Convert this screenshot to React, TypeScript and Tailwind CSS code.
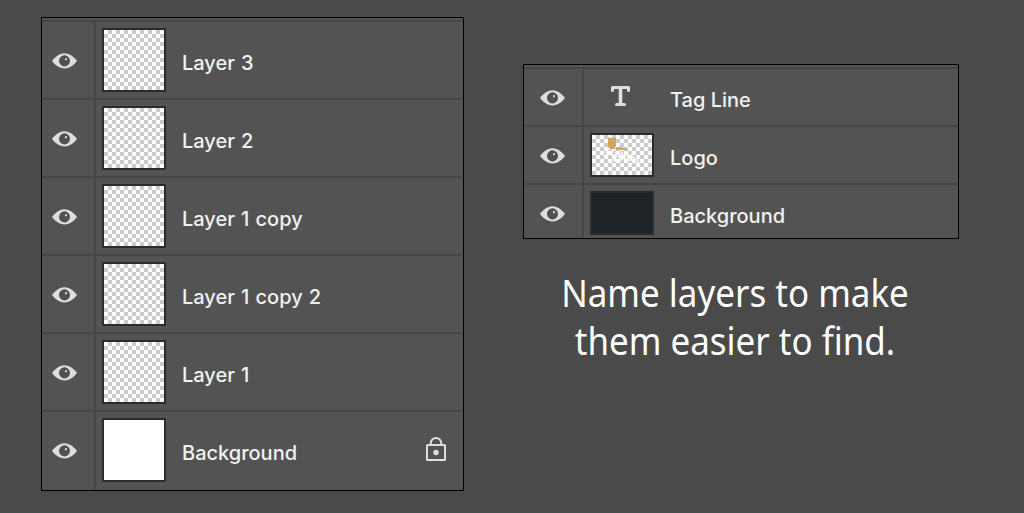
import type { ReactNode } from "react";

function Eye() {
  return (
    <svg width="25" height="16" viewBox="0 0 25 16" className="shrink-0">
      <path d="M0 8C2.800 4.400 7 .3 12.500 .3S22.200 4.400 25 8c-2.800 3.600-7 7.400-12.500 7.400S2.800 11.600 0 8Z" fill="#dedede" />
      <ellipse cx="12.500" cy="7.900" rx="5.500" ry="5.600" fill="#505050" />
      <rect x="13" y="5.200" width="2" height="2" fill="#d8d8d8" />
    </svg>
  );
}

function Lock() {
  return (
    <svg width="20" height="24" viewBox="0 0 20 24" fill="none" stroke="#dedede" strokeWidth="2">
      <rect x="1" y="8" width="18" height="15" rx="0.500" />
      <path d="M4.800 8V6.200a5.200 5.200 0 0 1 10.400 0V8" />
      <circle cx="10" cy="15.500" r="2.700" fill="#dedede" stroke="none" />
    </svg>
  );
}

function TypeIcon() {
  return (
    <svg width="19" height="20" viewBox="0 0 19 20" fill="none" stroke="#dedede" strokeWidth="3" strokeLinecap="round" strokeLinejoin="round">
      <path d="M1.500 4.500v-3h16v3M5.500 18.500h8" />
      <path d="M9.500 1.500v17" strokeWidth="3.600" />
    </svg>
  );
}

const checker = "bg-[conic-gradient(#fff_25%,#cbcbcb_0_50%,#fff_0_75%,#cbcbcb_0)] bg-[length:8px_8px] bg-[position:4px_0]";

function LogoMark() {
  return (
    <svg width="60" height="40" viewBox="0 0 60 40" className="block">
      <path d="M16 2l2 1h4l2-1v9l-1.500 3h-5L16 11Z" fill="#cda85f" />
      <path d="M23.500 13.500c3-2.500 9-2 13 2.500-4-1.200-8-1.200-13-.8Z" fill="#cda85f" />
      <path d="M14 14h4M15 14v6M20 15v5M24 17v6M27 16v7M30 17v8M33 17v8M36 18v5M40 18v5M22 21v5M25 25h5M23 24v3M33 24v3M36 25h5M42 22v5M45 22h3M46 24v4" stroke="white" strokeWidth="1.500" fill="none" />
    </svg>
  );
}

type RowProps = { name: string; thumb: ReactNode; size: string; eyeCell: string; label: string; lock?: boolean };

function Row({ name, thumb, size, eyeCell, label, lock }: RowProps) {
  return (
    <div className={`flex shrink-0 border-t-2 border-[#464646] ${size}`}>
      <div className={`flex shrink-0 border-r-2 border-[#464646] ${eyeCell}`}>
        <Eye />
      </div>
      <div className="ml-1.5 mt-1.5 w-16 shrink-0">{thumb}</div>
      <div className={`ml-4 whitespace-nowrap text-[20px] leading-6 font-medium text-[#f1f1f1] ${label}`}>{name}</div>
      {lock && <div className="mr-[17px] ml-auto mt-[25px]"><Lock /></div>}
    </div>
  );
}

const layers = ["Layer 3", "Layer 2", "Layer 1 copy", "Layer 1 copy 2", "Layer 1", "Background"];

export default function App() {
  return (
    <main className="flex h-[513px] w-[1024px] items-start overflow-hidden bg-[#4a4a4a] font-['Inter',sans-serif]">
      <section className="ml-[41px] mt-[17px] h-[474px] w-[423px] overflow-hidden border border-black bg-[#535353] pt-0.5">
        {layers.map((name, i) => (
          <Row
            key={name}
            name={name}
            size={i === 5 ? "h-20" : "h-[78px]"}
            eyeCell="w-[54px] pl-[10px] pt-[31px]"
            label="mt-[29px] [word-spacing:0.8px]"
            lock={i === 5}
            thumb={<div className={`size-16 border-2 border-[#2c2c2c] ${i === 5 ? "bg-white" : checker}`} />}
          />
        ))}
      </section>
      <div className="ml-[59px] mt-16 w-[436px]">
        <section className="h-[175px] overflow-hidden border border-black bg-[#535353] pt-0.5">
          <Row name="Tag Line" size="h-[58px]" eyeCell="w-[60px] pl-4 pt-[21px]" label="mt-[19px]" thumb={<div className="ml-[21px] mt-[11px]"><TypeIcon /></div>} />
          <Row name="Logo" size="h-[58px]" eyeCell="w-[60px] pl-4 pt-[21px]" label="mt-[19px]" thumb={<div className={`h-11 w-16 border-2 border-[#2c2c2c] ${checker}`}><LogoMark /></div>} />
          <Row name="Background" size="h-[58px]" eyeCell="w-[60px] pl-4 pt-[21px]" label="mt-[19px]" thumb={<div className="h-11 w-16 border-2 border-[#2c2c2c] bg-[#1d2327]" />} />
        </section>
        <div className="ml-[-23px] mt-[29px] flex w-[470px] origin-center scale-x-[0.92] flex-col items-center whitespace-nowrap font-['Noto_Sans',sans-serif] text-[38px] leading-[48px] text-white">
          <p>Name layers to make</p>
          <p>them easier to find.</p>
        </div>
      </div>
    </main>
  );
}
